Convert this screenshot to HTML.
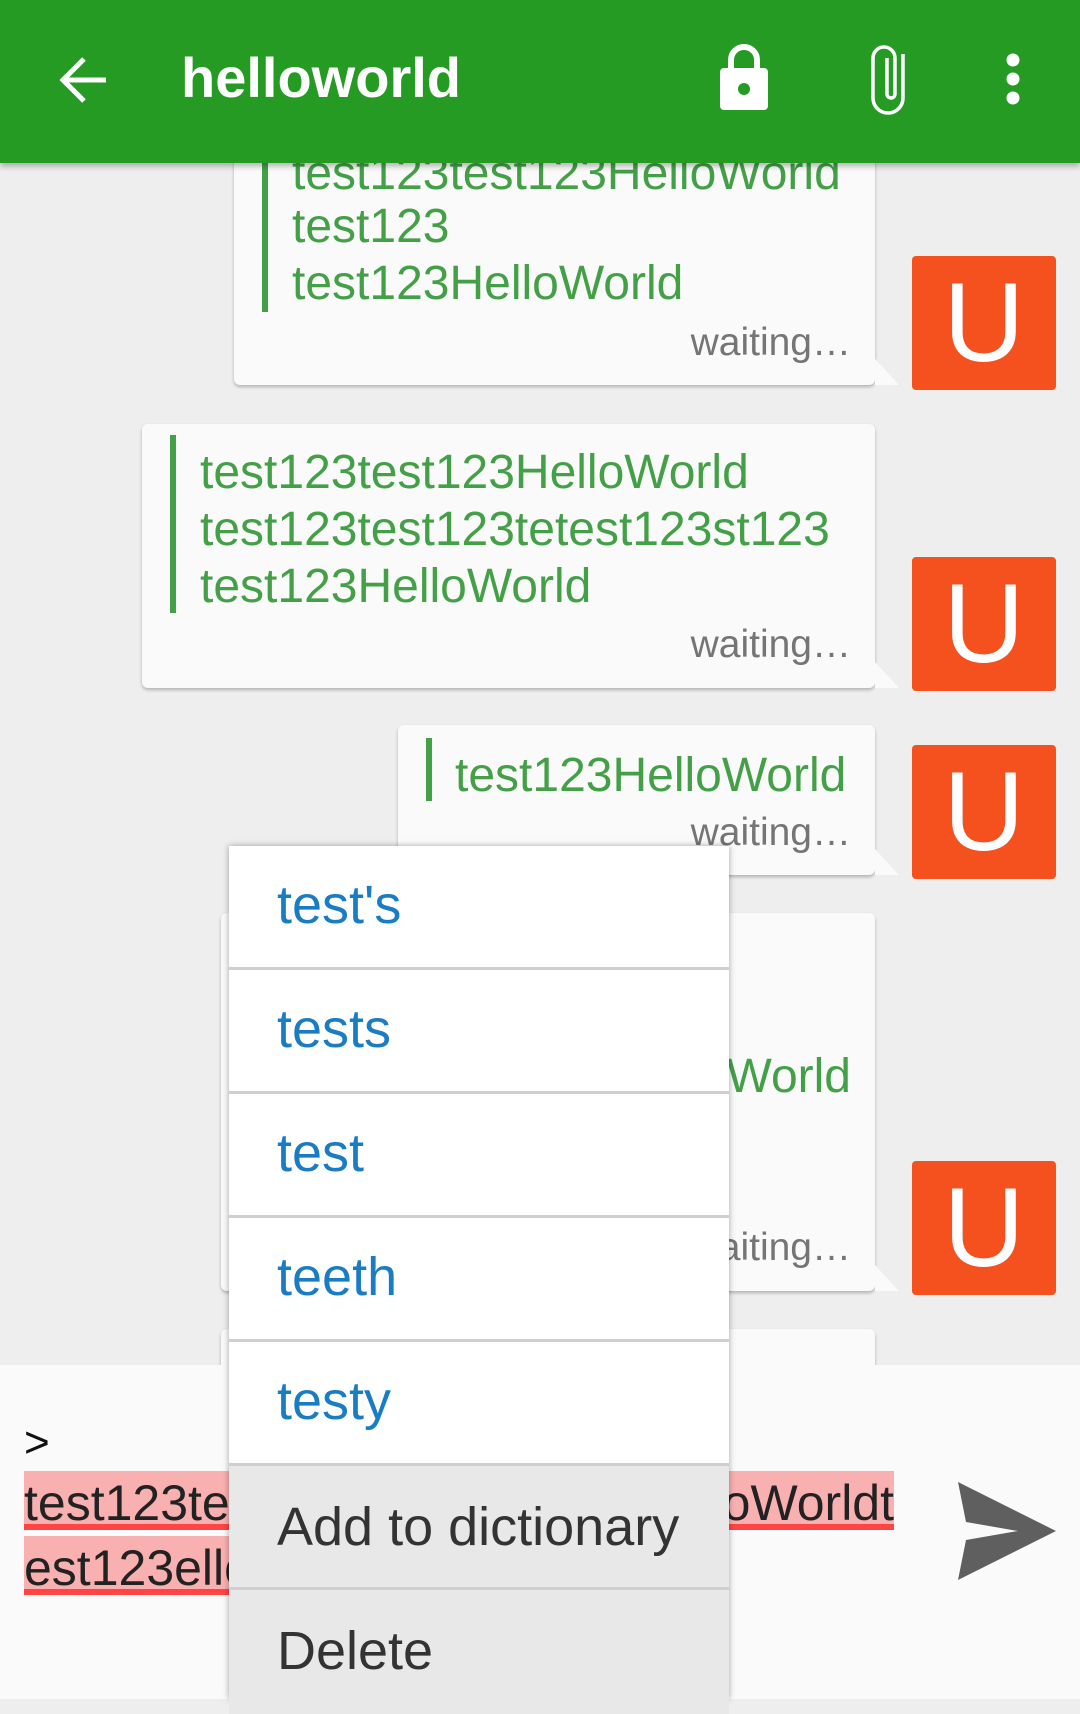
<!DOCTYPE html>
<html><head><meta charset="utf-8"><style>
*{margin:0;padding:0;box-sizing:border-box}
body{width:1080px;height:1699px;background:#eeeeee;position:relative;overflow:hidden;font-family:"Liberation Sans",sans-serif}
.a{position:absolute}
.bub{position:absolute;background:#fafafa;border-radius:6px;box-shadow:0 2px 3px rgba(0,0,0,.25)}
.g{position:absolute;color:#43a047;font-size:48px;white-space:nowrap;line-height:1}
.w{position:absolute;color:#757575;font-size:39px;white-space:nowrap;line-height:1}
.bar{position:absolute;background:#43a047;width:6px}
.av{position:absolute;left:912px;width:144px;height:134px;background:#f4511e;border-radius:4px;color:#fff;font-size:112px;text-align:center;line-height:134px}
.tail{position:absolute;width:0;height:0;border-top:26px solid transparent;border-left:24px solid #fafafa}
.it{position:absolute;left:229px;width:500px;height:124px;background:#fff;border-bottom:3px solid #cfcfcf;z-index:5}
.it span{position:absolute;left:48px;top:32px;font-size:54px;line-height:1;color:#1a7dc4}
.it.d{background:#e8e8e8}
.it.d span{color:#333}
</style></head><body>

<!-- bubble 1 -->
<div class="bub" style="left:234px;top:120px;width:641px;height:265px"></div>
<div class="tail" style="left:875px;top:359px"></div>
<div class="bar" style="left:262px;top:150px;height:162px"></div>
<div class="g" style="left:292px;top:150px">test123test123HelloWorld</div>
<div class="g" style="left:292px;top:203px">test123</div>
<div class="g" style="left:292px;top:260px">test123HelloWorld</div>
<div class="w" style="right:229px;top:323px">waiting…</div>
<div class="av" style="top:256px">U</div>

<!-- bubble 2 -->
<div class="bub" style="left:142px;top:424px;width:733px;height:264px"></div>
<div class="tail" style="left:875px;top:662px"></div>
<div class="bar" style="left:170px;top:435px;height:178px"></div>
<div class="g" style="left:200px;top:449px">test123test123HelloWorld</div>
<div class="g" style="left:200px;top:506px">test123test123tetest123st123</div>
<div class="g" style="left:200px;top:563px">test123HelloWorld</div>
<div class="w" style="right:229px;top:625px">waiting…</div>
<div class="av" style="top:557px">U</div>

<!-- bubble 3 -->
<div class="bub" style="left:398px;top:725px;width:477px;height:150px"></div>
<div class="tail" style="left:875px;top:849px"></div>
<div class="bar" style="left:426px;top:738px;height:63px"></div>
<div class="g" style="left:455px;top:752px">test123HelloWorld</div>
<div class="w" style="right:229px;top:813px">waiting…</div>
<div class="av" style="top:745px">U</div>

<!-- bubble 4 -->
<div class="bub" style="left:221px;top:913px;width:654px;height:378px"></div>
<div class="tail" style="left:875px;top:1265px"></div>
<div class="g" style="right:229px;top:1053px">World</div>
<div class="w" style="right:229px;top:1228px">waiting…</div>
<div class="av" style="top:1161px">U</div>

<!-- bubble 5 -->
<div class="bub" style="left:221px;top:1329px;width:654px;height:80px"></div>

<!-- input area -->
<div class="a" style="left:0;top:1365px;width:1080px;height:334px;background:#fafafa"></div>
<div class="a" style="left:24px;top:1418px;font-size:44px;color:#111">&gt;</div>
<div class="a" style="left:24px;top:1471px;width:210px;height:59px;background:#f9b0b0;border-bottom:6px solid #ff4444"></div>
<div class="a" style="left:700px;top:1471px;width:194px;height:59px;background:#f9b0b0;border-bottom:6px solid #ff4444"></div>
<div class="a" style="left:24px;top:1536px;width:210px;height:59px;background:#f9b0b0;border-bottom:6px solid #ff4444"></div>
<div class="a" style="left:24px;top:1478px;font-size:50px;color:#222;line-height:1;white-space:nowrap">test123test</div>
<div class="a" style="right:186px;top:1478px;font-size:50px;color:#222;line-height:1;white-space:nowrap">HelloWorldt</div>
<div class="a" style="left:24px;top:1543px;font-size:50px;color:#222;line-height:1;white-space:nowrap">est123ello</div>
<svg class="a" style="left:958px;top:1482px" width="98" height="98" viewBox="0 0 98 98"><polygon points="0,0 98,49 0,98 8,58 60,49 8,40" fill="#5f5f5f"/></svg>

<!-- popup -->
<div class="a" style="left:229px;top:846px;width:500px;height:853px;background:#fff;box-shadow:0 0 6px rgba(0,0,0,.35);z-index:4"></div>
<div class="it" style="top:846px"><span>test's</span></div>
<div class="it" style="top:970px"><span>tests</span></div>
<div class="it" style="top:1094px"><span>test</span></div>
<div class="it" style="top:1218px"><span>teeth</span></div>
<div class="it" style="top:1342px"><span>testy</span></div>
<div class="it d" style="top:1466px"><span style="top:34px">Add to dictionary</span></div>
<div class="it d" style="top:1590px;height:124px;border:0"><span style="top:34px">Delete</span></div>

<!-- app bar -->
<div class="a" style="left:0;top:0;width:1080px;height:163px;background:#259b24;box-shadow:0 3px 6px rgba(0,0,0,.3);z-index:6"></div>
<svg class="a" style="left:58px;top:55px;z-index:7" width="52" height="50" viewBox="0 0 52 50"><path d="M48 25H6M26 4L5 25L26 46" stroke="#fff" stroke-width="5" fill="none"/></svg>
<div class="a" style="left:181px;top:50px;font-size:56px;font-weight:bold;color:#fff;line-height:1;z-index:7">helloworld</div>
<svg class="a" style="left:718px;top:44px;z-index:7" width="52" height="68" viewBox="0 0 52 68"><path d="M13 24V16a13 13 0 0 1 26 0v8" stroke="#fff" stroke-width="6" fill="none"/><rect x="2" y="24" width="48" height="42" rx="4" fill="#fff"/><circle cx="26" cy="45" r="6" fill="#259b24"/></svg>
<svg class="a" style="left:870px;top:44px;z-index:7" width="40" height="72" viewBox="0 0 40 72"><path d="M33 10V54a15 15 0 0 1-30 0V14a11 11 0 0 1 22 0V50a4 4 0 0 1-8 0V14" stroke="#fff" stroke-width="3.5" fill="none"/></svg>
<svg class="a" style="left:1001px;top:52px;z-index:7" width="24" height="56" viewBox="0 0 24 56"><circle cx="12" cy="8" r="6.5" fill="#fff"/><circle cx="12" cy="27" r="6.5" fill="#fff"/><circle cx="12" cy="46" r="6.5" fill="#fff"/></svg>
</body></html>
